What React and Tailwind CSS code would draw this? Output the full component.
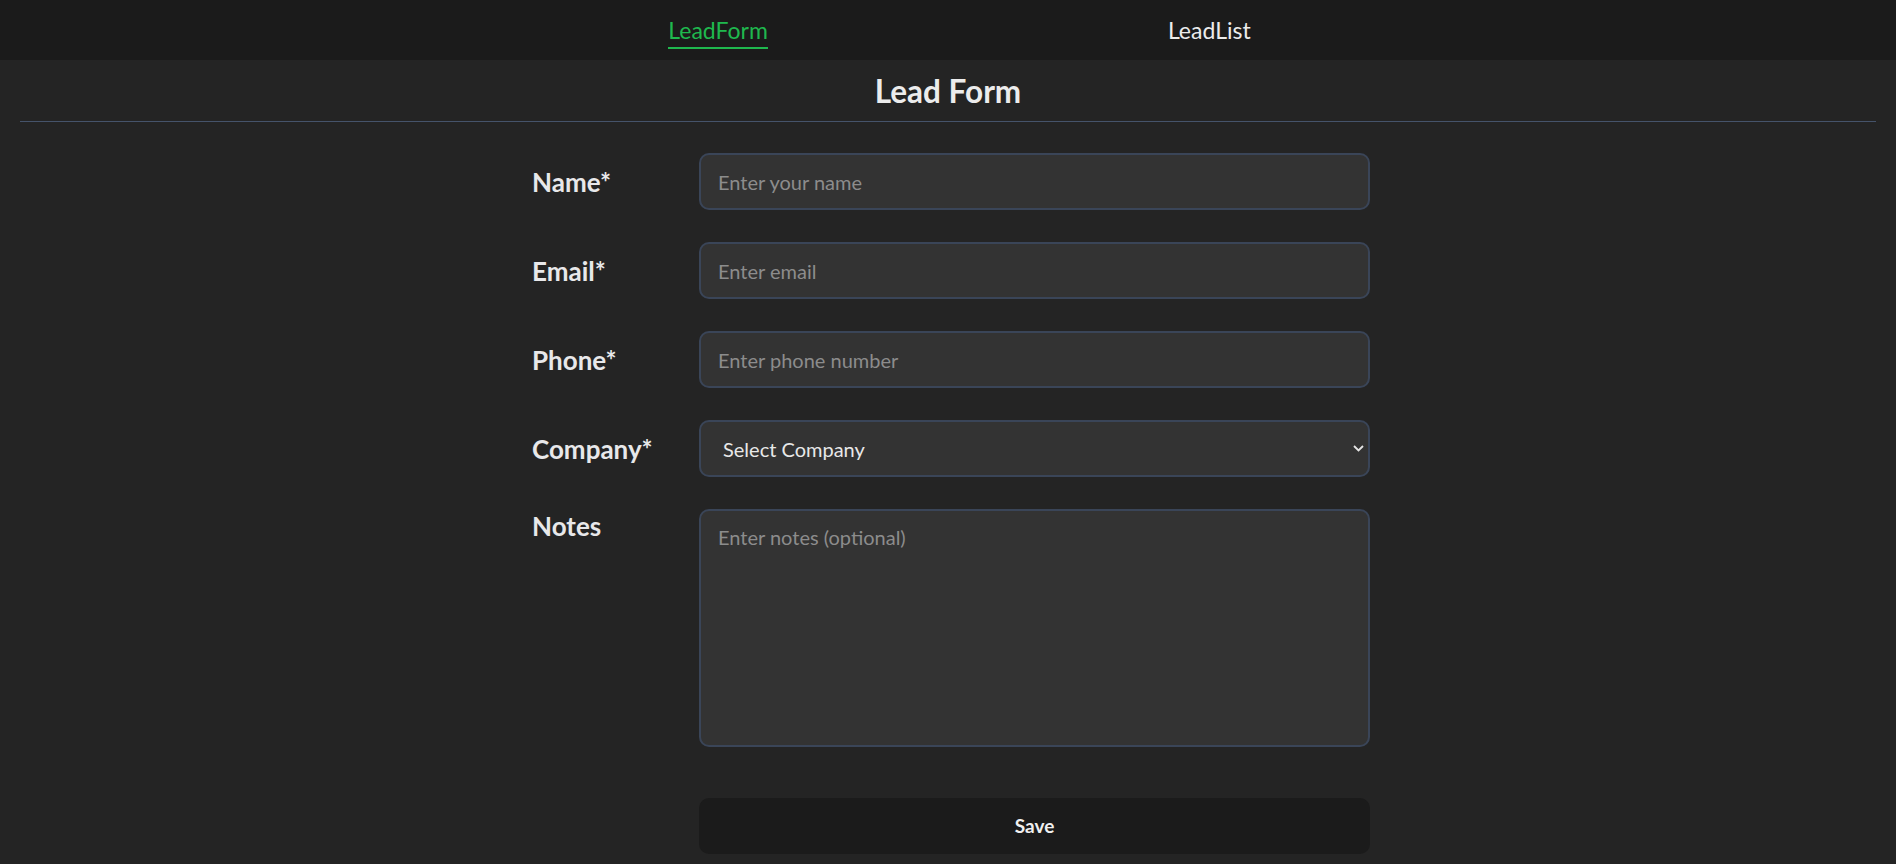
import { useState } from 'react'

const font = { fontFamily: 'Lato, "Open Sans", sans-serif' }

function Field({ label, children, top }) {
    return (
        <div className={`flex ${top ? 'items-start' : 'items-center'} mb-8`}>
            <label className={`w-[167px] shrink-0 text-[26px] leading-[30px] font-bold text-[#e8e8ea] ${top ? 'pt-[2px]' : ''}`}>{label}</label>
            {children}
        </div>
    )
}

const inputCls = "w-[671px] h-[57px] bg-[#333333] border-2 border-[#3a4558] rounded-[10px] px-[17px] text-[20px] text-[#e5e5e5] placeholder:text-[#8c8c8c] outline-none"

function App() {
    const [form, setForm] = useState({ name: "", email: "", phone: "", company: "", notes: "" })
    const update = (key) => (e) => setForm({ ...form, [key]: e.target.value })

    return (
        <div className="min-h-screen bg-[#242424]" style={font}>
            <nav className="h-[60px] bg-[#1b1b1b] flex items-start justify-center gap-[400px] pl-[23px] pt-[15px]">
                <a href="#" className="text-[23px] leading-[30px] pb-[2px] text-[#1fb84e] border-b-2 border-[#1fb84e]">LeadForm</a>
                <a href="#" className="text-[23px] leading-[30px] text-[#ececec]">LeadList</a>
            </nav>

            <h1 className="mt-[13px] text-center text-[31.5px] leading-[37px] font-bold text-[#ececec]">Lead Form</h1>
            <div className="mx-[20px] mt-[11px] h-px bg-[#45536a]"></div>

            <div className="flex justify-center pl-[6px] pt-[31px]">
                <form className="w-[838px]" onSubmit={(e) => e.preventDefault()}>
                    <Field label="Name*">
                        <input className={inputCls} placeholder="Enter your name" value={form.name} onChange={update("name")} />
                    </Field>
                    <Field label="Email*">
                        <input className={inputCls} placeholder="Enter email" value={form.email} onChange={update("email")} />
                    </Field>
                    <Field label="Phone*">
                        <input className={inputCls} placeholder="Enter phone number" value={form.phone} onChange={update("phone")} />
                    </Field>
                    <Field label="Company*">
                        <div className="relative">
                            <select className={`${inputCls} appearance-none pl-[22px] text-[#e8e8e8]`} value={form.company} onChange={update("company")}>
                                <option value="">Select Company</option>
                                <option value="acme">Acme Corp</option>
                            </select>
                            <svg className="absolute right-[6px] top-[25px] pointer-events-none" width="11" height="7" viewBox="0 0 11 7" fill="none">
                                <path d="M1 1l4.5 4.5L10 1" stroke="#e5e5e5" strokeWidth="1.8" />
                            </svg>
                        </div>
                    </Field>
                    <Field label="Notes" top>
                        <textarea className={`${inputCls} h-[238px] pt-[14px] leading-[24px] resize-none`} placeholder="Enter notes (optional)" value={form.notes} onChange={update("notes")} />
                    </Field>
                    <div className="flex pl-[167px] mt-[51px]">
                        <button type="submit" className="w-[671px] h-[56px] bg-[#1b1b1b] rounded-[10px] text-[19px] font-bold text-[#f0f0f0]">Save</button>
                    </div>
                </form>
            </div>
        </div>
    );
}

export default App;
